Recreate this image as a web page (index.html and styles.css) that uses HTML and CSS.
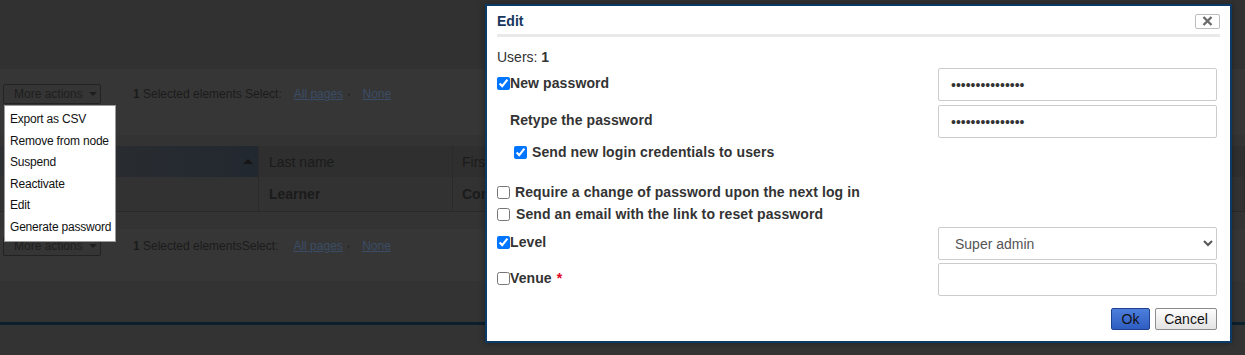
FILE: index.html
```html
<!DOCTYPE HTML>
<html>
  <head>
    <title>Users - Edit</title>
    <link rel="stylesheet" href="styles.css">
  </head>
  <body>
    <div class="page">
      <div class="top"></div>

      <div class="toolbar first">
        <button class="more">More actions <span class="caret"></span></button>
        <span class="count"><b>1</b> Selected elements Select:</span>
        <a href="#">All pages</a> , <a href="#">None</a>
      </div>

      <div class="grid">
        <div class="thead">
          <div class="col c1 sorted"><span class="arrow"></span></div>
          <div class="col c2">Last name</div>
          <div class="col c3">First name</div>
        </div>
        <div class="trow">
          <div class="col c1"></div>
          <div class="col c2"><b>Learner</b></div>
          <div class="col c3"><b>Corinne</b></div>
        </div>
      </div>

      <div class="toolbar second">
        <button class="more">More actions <span class="caret"></span></button>
        <span class="count"><b>1</b> Selected elementsSelect:</span>
        <a href="#">All pages</a> , <a href="#">None</a>
      </div>

      <div class="footer-line"></div>
    </div>

    <ul class="menu">
      <li>Export as CSV</li>
      <li>Remove from node</li>
      <li>Suspend</li>
      <li>Reactivate</li>
      <li>Edit</li>
      <li>Generate password</li>
    </ul>

    <div class="dialog">
      <div class="dlg-head">
        <span class="dlg-title">Edit</span>
        <button class="close" title="Close">
          <svg width="11" height="10" viewBox="0 0 11 10"><path d="M1.5 1L9.5 9M9.5 1L1.5 9" stroke="#6a6a6a" stroke-width="2.4"/></svg>
        </button>
      </div>
      <div class="dlg-body">
        <div class="users">Users: <b>1</b></div>

        <div class="row">
          <label class="lbl"><input type="checkbox" checked>New password</label>
          <input class="field pwd" type="password" value="secretpassword1">
        </div>
        <div class="row">
          <label class="lbl indent">Retype the password</label>
          <input class="field pwd" type="password" value="secretpassword1">
        </div>

        <label class="check creds"><input type="checkbox" checked>Send new login credentials to users</label>
        <label class="check require"><input type="checkbox">Require a change of password upon the next log in</label>
        <label class="check mail"><input type="checkbox">Send an email with the link to reset password</label>

        <div class="row level">
          <label class="lbl"><input type="checkbox" checked>Level</label>
          <select class="field sel">
            <option>Super admin</option>
            <option>Admin</option>
            <option>User</option>
          </select>
        </div>
        <div class="row">
          <label class="lbl"><input type="checkbox">Venue <span class="req">*</span></label>
          <input class="field" type="text">
        </div>

        <div class="actions">
          <button class="btn ok">Ok</button>
          <button class="btn cancel">Cancel</button>
        </div>
      </div>
    </div>
  </body>
</html>
```

FILE: styles.css
```css
body {
  margin: 0;
  background: #333;
  font-family: "Liberation Sans", Arial, sans-serif;
  overflow: hidden;
}

/* dimmed page behind the modal */
.page { color: #1b1b1b; }
.page .top { height: 69px; background: #313131; }

.toolbar {
  display: flex;
  align-items: flex-start;
  box-sizing: border-box;
  background: #363636;
  font-size: 12px;
  padding-left: 3px;
}
.toolbar.first { height: 66px; padding-top: 15px; margin-bottom: 11px; }
.toolbar.second { height: 52px; padding-top: 7px; margin-top: 17px; }

.toolbar .more {
  width: 98px;
  height: 20px;
  background: #353535;
  border: 1px solid #232323;
  border-radius: 2px;
  color: #1e1e1e;
  font: 12px "Liberation Sans", Arial, sans-serif;
  text-align: left;
  padding: 0 0 0 10px;
  margin-right: 32px;
}
.toolbar .caret {
  display: inline-block;
  margin-left: 3px;
  border-left: 4px solid transparent;
  border-right: 4px solid transparent;
  border-top: 4px solid #1e1e1e;
  vertical-align: 2px;
}
.toolbar .count { line-height: 20px; margin-right: 12px; }
.toolbar.second .count { margin-right: 15px; }
.toolbar a {
  color: #3b4d66;
  line-height: 20px;
  margin: 0 4px 0 0;
}
.toolbar a + a { margin-left: 12px; }

.grid { font-size: 14px; }
.grid .thead, .grid .trow { display: flex; }
.grid .thead { height: 31px; background: #2f2f2f; }
.grid .trow { height: 34px; background: #323232; border-bottom: 1px solid #292929; }
.grid .col {
  display: flex;
  align-items: center;
  box-sizing: border-box;
  border-right: 1px solid #2a2a2a;
}
.grid .c1 { width: 259px; }
.grid .c2 { width: 194px; padding-left: 10px; }
.grid .c3 { flex: 1; padding-left: 9px; }
.grid .sorted {
  background: linear-gradient(to right, #2e3033, #22282f);
  justify-content: flex-end;
  padding-right: 5px;
}
.grid .arrow {
  border-left: 5px solid transparent;
  border-right: 5px solid transparent;
  border-bottom: 5px solid #151515;
}

.footer-line { margin-top: 41px; height: 3px; background: #0c1f2d; }

/* dropdown of "More actions" */
.menu {
  position: absolute;
  left: 4px;
  top: 105px;
  width: 112px;
  margin: 0;
  padding: 3px 0;
  list-style: none;
  background: #fff;
  border: 1px solid #9a9a9a;
  box-sizing: border-box;
  font-size: 12px;
  color: #111;
}
.menu li { line-height: 21.5px; padding-left: 5px; white-space: nowrap; letter-spacing: -.2px; }

/* modal */
.dialog {
  position: absolute;
  left: 485px;
  top: 4px;
  width: 747px;
  height: 339px;
  box-sizing: border-box;
  background: #fff;
  border: 2px solid #0b3a66;
  box-shadow: 0 0 6px rgba(0,0,0,.35);
  color: #333;
}
.dlg-head {
  display: flex;
  justify-content: space-between;
  align-items: center;
  height: 28px;
  margin: 0 10px;
  border-bottom: 3px solid #e9e9e9;
}
.dlg-title { font-size: 14px; font-weight: bold; color: #17375e; margin-top: 1px; }
.close {
  display: flex;
  align-items: center;
  justify-content: center;
  width: 25px;
  height: 15px;
  padding: 0;
  background: #fff;
  border: 1px solid #bdbdbd;
  border-radius: 2px;
  margin-top: 2px;
}

.dlg-body { padding: 11px 13px 0 10px; font-size: 14px; }
.users { line-height: 18px; margin-bottom: 2px; }

.row {
  display: grid;
  grid-template-columns: 1fr 279px;
  align-items: center;
  height: 33px;
  margin-bottom: 4px;
}
.row.level { margin-top: 3px; margin-bottom: 3px; }

.lbl, .check {
  display: flex;
  align-items: center;
  font-weight: bold;
  letter-spacing: .1px;
}
.lbl { padding-bottom: 3px; }
.lbl input, .check input { margin: 0; width: 13px; height: 13px; }
.lbl.indent { padding-left: 13px; }
.req { color: #e2001a; margin-left: 5px; }

.check { height: 20px; gap: 5px; }
.check.creds { margin: 1px 0 0 17px; }
.check.require { margin-top: 20px; }
.check.mail { margin-top: 2px; gap: 6px; }

.field {
  height: 33px;
  box-sizing: border-box;
  border: 1px solid #ccc;
  border-radius: 2px;
  background: #fff;
  font: 14px "Liberation Sans", Arial, sans-serif;
  color: #555;
  padding: 0 12px;
}
.field.pwd { color: #333; }

.actions {
  display: flex;
  justify-content: flex-end;
  gap: 5px;
  margin-top: 12px;
}
.btn {
  height: 22px;
  padding: 0;
  border-radius: 2px;
  font: 14px "Liberation Sans", Arial, sans-serif;
  color: #111;
}
.btn.ok {
  width: 39px;
  background: linear-gradient(#4d7fdc, #2f5dc2);
  border: 1px solid #1f3f8f;
}
.btn.cancel {
  width: 62px;
  background: linear-gradient(#fdfdfd, #e3e3e3);
  border: 1px solid #8c8c8c;
}
```
